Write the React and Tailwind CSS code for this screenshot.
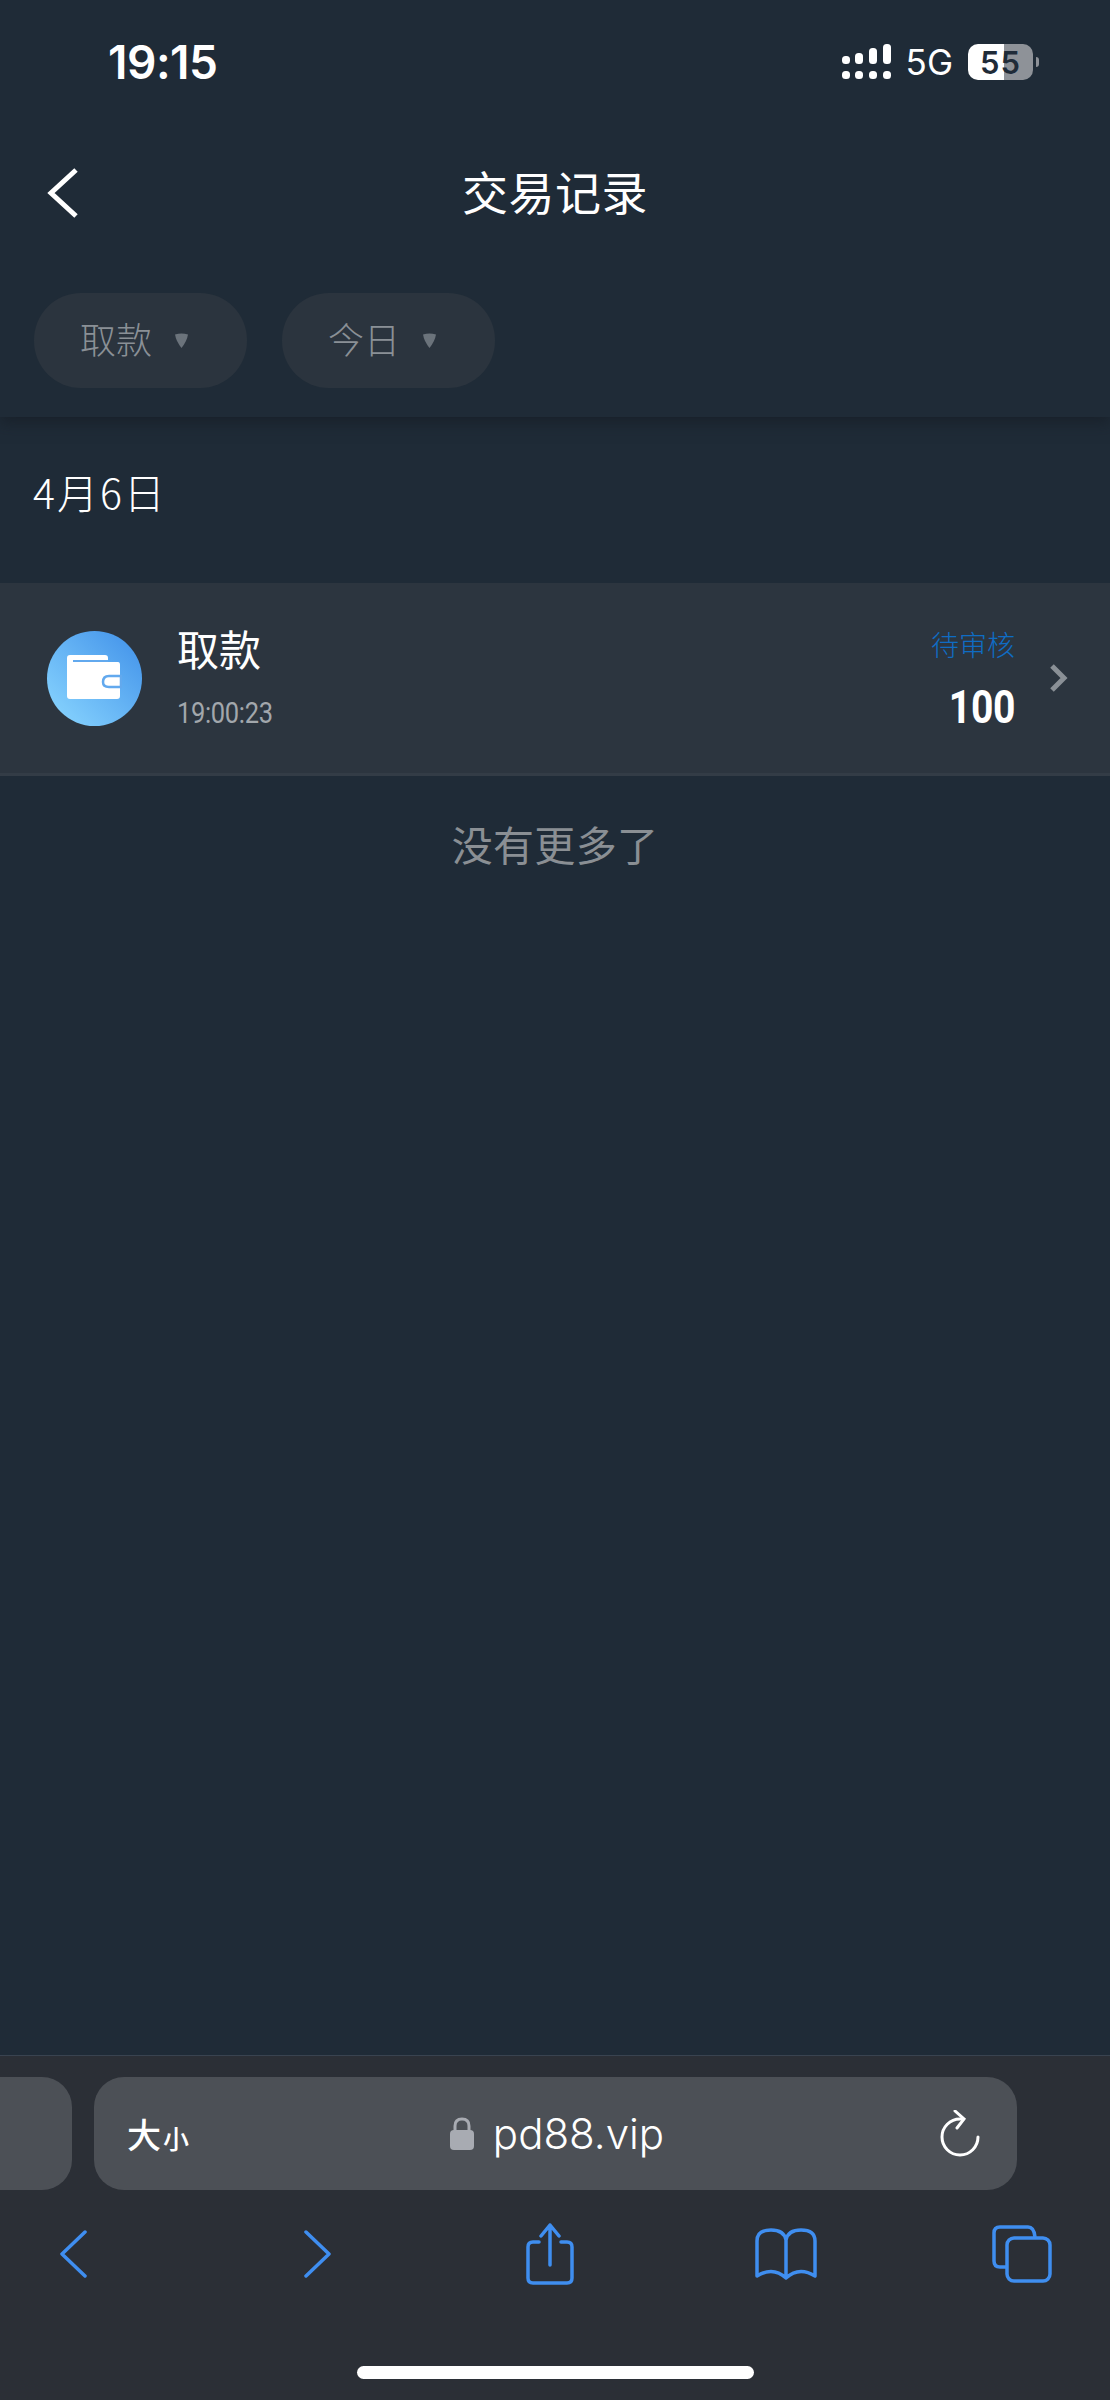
import React from "react";

const CJK = "font-['Noto_Sans_CJK_SC','Noto_Sans',sans-serif]";

const SignalIcon = () => (
  <svg width="50" height="36" viewBox="0 0 50 36" fill="#fff">
    <rect x="0" y="12" width="8" height="8" rx="3.5" />
    <rect x="13" y="9" width="8" height="11" rx="3.5" />
    <rect x="27" y="4" width="8" height="16" rx="3.5" />
    <rect x="41" y="0" width="8" height="20" rx="3.5" />
    <rect x="0" y="27" width="8" height="8" rx="3.5" />
    <rect x="13" y="27" width="8" height="8" rx="3.5" />
    <rect x="27" y="27" width="8" height="8" rx="3.5" />
    <rect x="41" y="27" width="8" height="8" rx="3.5" />
  </svg>
);

const StatusBar = () => (
  <div className="h-[124px] flex items-center justify-between pl-[108px] pr-[71px] text-white">
    <span className="font-['Inter',sans-serif] font-semibold text-[46px] tracking-[-0.5px] leading-none">19:15</span>
    <div className="flex items-center">
      <SignalIcon />
      <span className="ml-[14px] font-['Inter',sans-serif] text-[35px] leading-none">5G</span>
      <div className="ml-[15px] w-[65px] h-[36px] rounded-[10px] bg-[linear-gradient(90deg,#fff_55%,#8e9298_55%)] flex items-center justify-center text-[#1f2b38] font-['Inter',sans-serif] font-semibold text-[31px] tracking-[1px] leading-none">
        55
      </div>
      <div className="ml-[3px] w-[3px] h-[10px] rounded-r-full bg-[#8e9298]" />
    </div>
  </div>
);

const Pill = ({ label }) => (
  <div className="w-[213px] h-[95px] rounded-[47px] bg-[#2b343e] flex items-center pl-[46px] text-[#8a9096] text-[36px] font-light">
    <span className="leading-none -mt-[5px]">{label}</span>
    <svg className="ml-[21px]" width="17" height="15" viewBox="0 0 17 15" fill="#6b737b">
      <path d="M2 1.5 Q8.5 -0.5 15 1.5 Q14 8 8.5 15 Q3 8 2 1.5Z" />
    </svg>
  </div>
);

const WalletIcon = () => (
  <svg className="-mt-[2px]" width="55" height="45" viewBox="0 0 55 45">
    <path d="M3 0 H38 Q41 0 41 3 V7 H51 Q53 7 53 10 V41 Q53 44 50 44 H3 Q0 44 0 41 V3 Q0 0 3 0Z" fill="#fff" />
    <path d="M6 6 H41" stroke="#62a9ee" strokeWidth="2" />
    <path d="M54 21 H42 Q36 21 36 27 Q36 32 42 32 H54 Z" fill="#fff" stroke="#62a9ee" strokeWidth="2.5" />
  </svg>
);

const TransactionRow = () => (
  <div className="h-[193px] bg-[#2c353f] border-b-[3px] border-[#333c46] flex items-center pl-[47px] pr-[42px]">
    <div className="w-[95px] h-[95px] rounded-full bg-gradient-to-tr from-[#8cd8ff] to-[#3f8fe8] flex items-center justify-center shrink-0">
      <WalletIcon />
    </div>
    <div className="ml-[35px] flex flex-col flex-1 -mt-[3px]">
      <span className="text-white text-[42px] leading-[48px] -mt-[2px]">取款</span>
      <span className="mt-[27px] text-[#a2a7ac] font-['Roboto',sans-serif] text-[30px] tracking-[-0.4px] leading-[28px] origin-left scale-x-[0.85]">19:00:23</span>
    </div>
    <div className="flex flex-col items-end">
      <span className="text-[#0f6cc4] text-[28px] font-light leading-[34px]">待审核</span>
      <span className="mt-[23px] text-white font-['Roboto',sans-serif] font-bold text-[46px] tracking-[-0.3px] leading-[46px] origin-right scale-x-[0.85]">100</span>
    </div>
    <svg className="ml-[34px]" width="19" height="28" viewBox="0 0 19 28" fill="none" stroke="#8a9096" strokeWidth="5">
      <path d="M3 2 L15 14 L3 26" />
    </svg>
  </div>
);

const AddressBar = () => (
  <div className="flex gap-[22px] mt-[21px]">
    <div className="w-[72px] h-[113px] rounded-r-[30px] bg-[#4c5056] shrink-0" />
    <div className="w-[923px] h-[113px] rounded-[30px] bg-[#4c5056] flex items-center justify-between pl-[33px] pr-[36px] text-white">
      <span className="flex items-end w-[62px]">
        <span className="text-[34px] font-medium leading-none">大</span>
        <span className="text-[26px] font-medium leading-none ml-[2px]">小</span>
      </span>
      <div className="flex items-center -ml-[14px]">
        <svg width="24" height="33" viewBox="0 0 24 33" fill="#a8abb2">
          <rect x="0" y="13" width="24" height="20" rx="4" />
          <path d="M5 14 V9 Q5 2 12 2 Q19 2 19 9 V14" fill="none" stroke="#a8abb2" strokeWidth="3" />
        </svg>
        <span className="ml-[19px] font-['Inter',sans-serif] font-light text-[42px] leading-none">pd88.vip</span>
      </div>
      <svg width="42" height="48" viewBox="0 0 42 48" fill="none" stroke="#fff" strokeWidth="3" strokeLinecap="round">
        <path d="M39 27 A18 18 0 1 1 21 9 H24" />
        <path d="M16 1 L25 9 L18 18" />
      </svg>
    </div>
  </div>
);

const NavIcons = () => (
  <div className="mt-[33px] flex items-center pl-[60px] h-[62px]">
    <svg width="27" height="48" viewBox="0 0 27 48" fill="none" stroke="#3f8ef0" strokeWidth="3.5" strokeLinecap="round" strokeLinejoin="round">
      <path d="M25 2 L2 24 L25 46" />
    </svg>
    <svg className="ml-[217px]" width="27" height="48" viewBox="0 0 27 48" fill="none" stroke="#3f8ef0" strokeWidth="3.5" strokeLinecap="round" strokeLinejoin="round">
      <path d="M2 2 L25 24 L2 46" />
    </svg>
    <svg className="ml-[195px]" width="48" height="62" viewBox="0 0 48 62" fill="none" stroke="#3f8ef0" strokeWidth="3.5" strokeLinecap="round" strokeLinejoin="round">
      <path d="M13 19 H7 Q2 19 2 24 V55 Q2 60 7 60 H41 Q46 60 46 55 V24 Q46 19 41 19 H35" />
      <path d="M24 42 V2 M15 13 L24 2 L33 13" />
    </svg>
    <svg className="ml-[181px]" width="62" height="52" viewBox="0 0 62 52" fill="none" stroke="#3f8ef0" strokeWidth="3.5" strokeLinecap="round" strokeLinejoin="round">
      <path d="M31 12 Q29 2 16 2 Q2 2 2 13 V48 Q18 38 31 50 Q44 38 60 48 V13 Q60 2 46 2 Q33 2 31 12 V50" />
    </svg>
    <svg className="ml-[175px]" width="60" height="58" viewBox="0 0 60 58" fill="none" stroke="#3f8ef0" strokeWidth="3.5" strokeLinejoin="round">
      <path d="M14 42 H8 Q2 42 2 36 V8 Q2 2 8 2 H36 Q42 2 43 12" />
      <rect x="15" y="13" width="43" height="43" rx="7" />
    </svg>
  </div>
);

const App = () => {
  return (
    <div className={`h-[2400px] w-[1110px] bg-[#1f2b37] flex flex-col overflow-hidden ${CJK}`}>
      <header className="h-[417px] shadow-[0_6px_14px_rgba(20,26,33,0.55)] relative">
        <StatusBar />
        <div className="h-[138px] relative flex items-center justify-center">
          <svg className="absolute left-[47px] top-[44px]" width="31" height="50" viewBox="0 0 31 50" fill="none" stroke="#fff" strokeWidth="5">
            <path d="M29 2 L4 25 L29 48" />
          </svg>
          <h1 className="text-white text-[46px] tracking-[0.5px] font-normal leading-none -mt-[6px]">交易记录</h1>
        </div>
        <div className="mt-[31px] pl-[34px] flex gap-[35px]">
          <Pill label="取款" />
          <Pill label="今日" />
        </div>
      </header>

      <div className="h-[166px] pl-[33px] pt-[51px] text-white text-[41px] tracking-[2px] font-light leading-[46px]">4月6日</div>

      <TransactionRow />

      <div className="mt-[42px] text-center text-[#8a8f94] text-[41px] font-normal tracking-[0.3px] leading-[50px]">没有更多了</div>

      <div className="flex-1" />

      <footer className="h-[345px] bg-[#2b2f36] border-t border-[#394350]">
        <AddressBar />
        <NavIcons />
        <div className="mt-[81px] mx-auto w-[397px] h-[13px] rounded-full bg-white" />
      </footer>
    </div>
  );
};

export default App;
